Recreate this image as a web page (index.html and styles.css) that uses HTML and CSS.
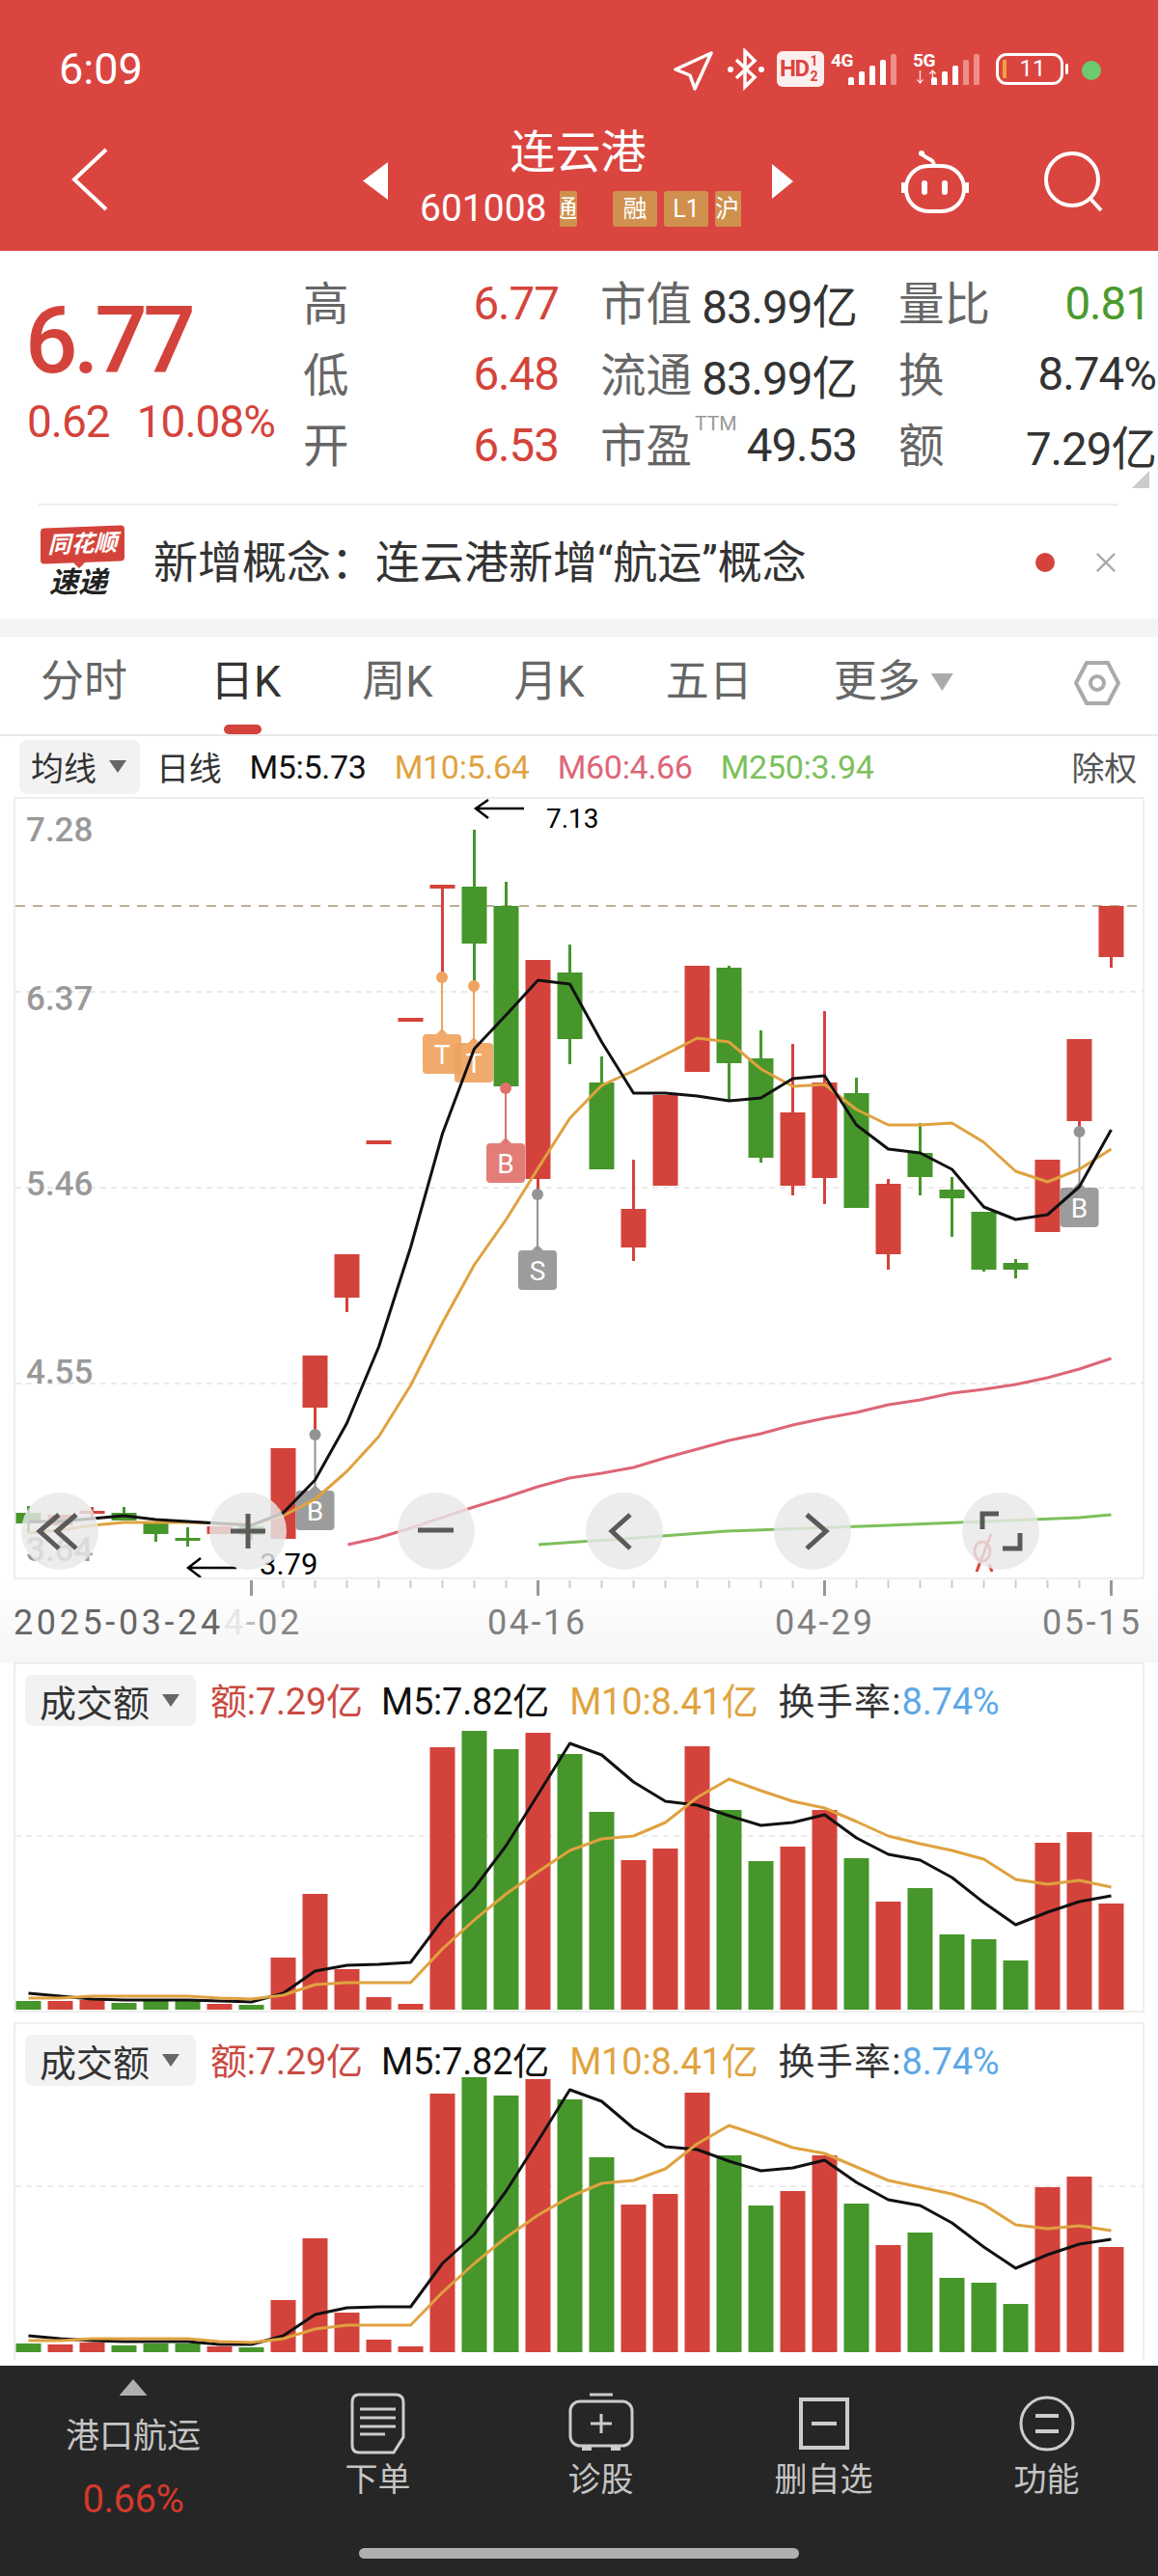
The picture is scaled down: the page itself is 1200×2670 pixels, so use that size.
FILE: index.html
```html
<!DOCTYPE html>
<html lang="zh">

<head>
  <meta charset="UTF-8" />
  <meta name="viewport" content="width=device-width, initial-scale=1.0" />
  <title>连云港 601008</title>
  <link rel="stylesheet" href="styles.css">
</head>

<body>
  <div class="header">
    <div class="status-bar">
      <span class="clock">6:09</span>
      <svg class="icon-locate" viewBox="0 0 42 42">
        <path d="M39 3 L2 20 L17 26 L22 40 Z" />
      </svg>
      <svg class="icon-bt" viewBox="0 0 38 44">
        <path d="M9 12 L28 30 L18 40 V3 L28 13 L9 31" />
        <circle cx="3" cy="22" r="3" />
        <circle cx="35" cy="22" r="3" />
      </svg>
      <span class="hd-badge">HD<span class="hd-sub">1<br>2</span></span>
      <div class="signal signal-4g">
        <span class="net-label">4G</span>
        <div class="bars">
          <i class="b1"></i><i class="b2"></i><i class="b3"></i><i class="b4"></i><i class="b5 dim"></i>
        </div>
      </div>
      <div class="signal signal-5g">
        <span class="net-label">5G</span>
        <span class="net-arrows">↓↑</span>
        <div class="bars">
          <i class="b1"></i><i class="b2"></i><i class="b3"></i><i class="b4 dim"></i><i class="b5 dim"></i>
        </div>
      </div>
      <div class="battery"><i class="battery-low"></i>11</div>
      <i class="battery-nub"></i>
      <i class="green-dot"></i>
    </div>

    <div class="nav-bar">
      <svg class="icon-back" viewBox="0 0 40 66">
        <path d="M36 2 L3 33 L36 64" />
      </svg>
      <div class="tri-left"></div>
      <div class="stock-title">
        <div class="stock-name">连云港</div>
        <div class="stock-sub">
          <span class="stock-code">601008</span>
          <span class="tag tag-cut-left">通</span>
          <span class="tag tag-first">融</span>
          <span class="tag">L1</span>
          <span class="tag tag-cut-right">沪</span>
        </div>
      </div>
      <div class="tri-right"></div>
      <svg class="icon-robot" viewBox="0 0 76 68">
        <path d="M37 18 C37 9 27 12 24 4" />
        <circle cx="24" cy="5" r="3" />
        <rect x="8" y="18" width="60" height="47" rx="23" />
        <path d="M5 35 V46 M71 35 V46" />
        <rect class="solid" x="24" y="33" width="6" height="15" rx="3" />
        <rect class="solid" x="45" y="33" width="6" height="15" rx="3" />
      </svg>
      <svg class="icon-search" viewBox="0 0 64 64">
        <circle cx="30" cy="30" r="27" />
        <path d="M49 50 L60 62" />
      </svg>
    </div>
  </div>

  <div class="quote">
    <div class="price-box">
      <div class="price-big">6.77</div>
      <div class="price-change"><span>0.62</span><span>10.08%</span></div>
    </div>
    <div class="stats">
      <div class="stat"><span class="stat-label">高</span><span class="stat-red">6.77</span></div>
      <div class="stat"><span class="stat-label">市值</span><span class="stat-val">83.99亿</span></div>
      <div class="stat"><span class="stat-label">量比</span><span class="stat-green">0.81</span></div>
      <div class="stat"><span class="stat-label">低</span><span class="stat-red">6.48</span></div>
      <div class="stat"><span class="stat-label">流通</span><span class="stat-val">83.99亿</span></div>
      <div class="stat"><span class="stat-label">换</span><span class="stat-val">8.74%</span></div>
      <div class="stat"><span class="stat-label">开</span><span class="stat-red">6.53</span></div>
      <div class="stat"><span class="stat-label">市盈<sup class="ttm">TTM</sup></span><span class="stat-val">49.53</span></div>
      <div class="stat"><span class="stat-label">额</span><span class="stat-val">7.29亿</span></div>
    </div>
    <div class="corner"></div>
  </div>

  <div class="news">
    <div class="news-logo">
      <div class="logo-top">同花顺</div>
      <div class="logo-bottom">速递</div>
    </div>
    <div class="news-text">新增概念：连云港新增“航运”概念</div>
    <i class="news-dot"></i>
    <svg class="news-close" viewBox="0 0 24 24">
      <path d="M2 2 L22 22 M22 2 L2 22" />
    </svg>
  </div>

  <div class="gap"></div>

  <div class="tabs">
    <div class="tab">分时</div>
    <div class="tab active">日K</div>
    <div class="tab">周K</div>
    <div class="tab">月K</div>
    <div class="tab">五日</div>
    <div class="tab tab-more">更多<i class="caret caret-light"></i></div>
    <svg class="icon-hex" viewBox="0 0 48 48">
      <path d="M13 3 H35 L46 24 L35 45 H13 L2 24 Z" />
      <circle cx="24" cy="24" r="7" />
    </svg>
  </div>

  <div class="legend">
    <div class="chip chip-ma">均线<i class="caret"></i></div>
    <span>日线</span>
    <span class="c-black">M5:5.73</span>
    <span class="c-orange">M10:5.64</span>
    <span class="c-pink">M60:4.66</span>
    <span class="c-green">M250:3.94</span>
    <span class="legend-right">除权</span>
  </div>

  <div class="kline-panel">
    <svg id="klineChart" class="kline-svg" viewBox="16 828 1168 807"></svg>
  </div>
  <div class="axis">
    <svg id="axisChart" class="axis-svg" viewBox="0 1637 1200 86"></svg>
  </div>

  <div class="vol-panel vol-first">
    <div class="vol-head">
      <div class="chip chip-vol">成交额<i class="caret"></i></div>
      <span class="c-red vol-amount">额:7.29亿</span>
      <span class="c-black">M5:7.82亿</span>
      <span class="c-orange">M10:8.41亿</span>
      <span class="c-dark">换手率:<span class="c-blue">8.74%</span></span>
    </div>
    <svg id="volChartA" class="vol-svg" viewBox="16 1789 1168 294"></svg>
  </div>

  <div class="vol-panel vol-second">
    <div class="vol-head">
      <div class="chip chip-vol">成交额<i class="caret"></i></div>
      <span class="c-red vol-amount">额:7.29亿</span>
      <span class="c-black">M5:7.82亿</span>
      <span class="c-orange">M10:8.41亿</span>
      <span class="c-dark">换手率:<span class="c-blue">8.74%</span></span>
    </div>
    <svg id="volChartB" class="vol-svg vol-svg-b" viewBox="16 2163 1168 276"></svg>
  </div>

  <div class="bottom-bar">
    <div class="bar-items">
      <div class="bar-item bar-sector">
        <i class="tri-up"></i>
        <div class="sector-name">港口航运</div>
        <div class="sector-pct">0.66%</div>
      </div>
      <div class="bar-item">
        <svg class="bar-icon" viewBox="0 0 60 66">
          <path d="M10 2 H48 Q56 2 56 10 V46 L46 62 H10 Q3 62 3 54 V10 Q3 2 10 2 Z" />
          <path d="M11 17 H48 M11 26 H48 M11 35 H48 M11 43 H37" />
        </svg>
        <div class="bar-label">下单</div>
      </div>
      <div class="bar-item">
        <svg class="bar-icon" viewBox="0 0 70 66">
          <rect x="3" y="9" width="64" height="46" rx="10" />
          <path d="M23 2 H47 M35 22 V42 M24 32 H46" />
          <path class="thick" d="M15 58 H25 M45 58 H55" />
        </svg>
        <div class="bar-label">诊股</div>
      </div>
      <div class="bar-item">
        <svg class="bar-icon" viewBox="0 0 60 66">
          <rect class="thick" x="6" y="7" width="48" height="50" />
          <path class="thick" d="M17 32 H43" />
        </svg>
        <div class="bar-label">删自选</div>
      </div>
      <div class="bar-item">
        <svg class="bar-icon" viewBox="0 0 60 66">
          <circle cx="30" cy="32" r="27" />
          <path class="thick" d="M18 24 H42 M18 40 H42" />
        </svg>
        <div class="bar-label">功能</div>
      </div>
    </div>
    <div class="home-indicator"></div>
  </div>

  <script src="chart.js"></script>
</body>

</html>
```

FILE: styles.css
```css
* {
  box-sizing: border-box;
}

body {
  font-family: Roboto, "Noto Sans CJK SC", sans-serif;
  margin: 0;
  width: 1200px;
  height: 2670px;
  overflow: hidden;
  background-color: #fff;
  color: #333;
}

svg {
  display: block;
  fill: none;
}

i {
  display: block;
}

/* top red area */
.header {
  height: 260px;
  background-color: #db4540;
  color: #fff;
}

.status-bar {
  height: 130px;
  padding-top: 50px;
  display: flex;
  align-items: flex-start;
  position: relative;
}

.clock {
  font-size: 45px;
  line-height: 44px;
  margin-left: 61px;
  width: 637px;
}

.icon-locate {
  width: 42px;
  height: 42px;
  margin-top: 2px;
  stroke: #fff;
  stroke-width: 3.5;
  stroke-linejoin: round;
}

.icon-bt {
  width: 38px;
  height: 44px;
  margin-left: 14px;
  stroke: #fff;
  stroke-width: 3.5;
}

.icon-bt circle {
  fill: #fff;
  stroke: none;
}

.hd-badge {
  width: 49px;
  height: 37px;
  margin: 3px 0 0 13px;
  background-color: #fdeeee;
  border-radius: 6px;
  color: #db4540;
  font-size: 24px;
  font-weight: 700;
  letter-spacing: -1.5px;
  line-height: 37px;
  padding-left: 3px;
  display: flex;
}

.hd-sub {
  font-size: 14px;
  line-height: 16px;
  letter-spacing: 0;
  margin-left: 2px;
  padding-top: 2px;
}

.signal {
  position: relative;
  height: 40px;
  margin-top: 4px;
}

.signal-4g {
  width: 70px;
  margin-left: 7px;
}

.signal-5g {
  width: 70px;
  margin-left: 15px;
}

.net-label {
  position: absolute;
  left: 0;
  top: 0;
  font-size: 19px;
  font-weight: 700;
  line-height: 18px;
  letter-spacing: -0.5px;
}

.net-arrows {
  position: absolute;
  left: 0;
  top: 18px;
  font-size: 15px;
  line-height: 16px;
  letter-spacing: -2px;
}

.bars {
  position: absolute;
  right: 1px;
  bottom: 6px;
  display: flex;
  align-items: flex-end;
  gap: 5px;
}

.signal-4g .bars {
  right: 2px;
}

.bars i {
  width: 6px;
  background-color: #fff;
  border-radius: 2px 2px 0 0;
}

.bars .b1 {
  height: 8px;
}

.bars .b2 {
  height: 14px;
}

.bars .b3 {
  height: 20px;
}

.bars .b4 {
  height: 26px;
}

.bars .b5 {
  height: 32px;
}

.bars .dim {
  background-color: #ee8f8b;
}

.battery {
  width: 70px;
  height: 33px;
  margin: 5px 0 0 16px;
  border: 3px solid #fff;
  border-radius: 11px;
  font-size: 24px;
  line-height: 27px;
  text-align: center;
  padding-left: 6px;
  position: relative;
}

.battery-low {
  position: absolute;
  left: 4px;
  top: 4px;
  width: 4px;
  height: 19px;
  background-color: #eda23d;
}

.battery-nub {
  width: 3px;
  height: 11px;
  margin: 16px 0 0 2px;
  background-color: #fff;
  border-radius: 2px;
}

.green-dot {
  width: 20px;
  height: 20px;
  margin: 13px 0 0 14px;
  background-color: #6ccb70;
  border-radius: 50%;
}

.nav-bar {
  height: 130px;
  display: flex;
  align-items: flex-start;
}

.icon-back {
  width: 40px;
  height: 66px;
  margin: 23px 0 0 74px;
  stroke: #fff;
  stroke-width: 4;
}

.tri-left {
  width: 26px;
  height: 39px;
  margin: 38px 0 0 262px;
  background-color: #fff;
  clip-path: polygon(100% 0, 0 50%, 100% 100%);
}

.stock-title {
  width: 398px;
  height: 120px;
  flex-shrink: 0;
}

.stock-name {
  text-align: center;
  font-size: 47px;
  line-height: 56px;
  margin: 0 2px 0 -2px;
}

.stock-sub {
  height: 42px;
  margin: 9px 0 0 33px;
  display: flex;
  align-items: center;
}

.stock-code {
  font-size: 39px;
  line-height: 42px;
  width: 145px;
}

.tag {
  width: 46px;
  height: 37px;
  margin-right: 7px;
  background-color: #d0914f;
  border-radius: 3px;
  font-size: 25px;
  line-height: 37px;
  text-align: center;
  overflow: hidden;
  display: flex;
  justify-content: center;
}

.tag-cut-left {
  width: 18px;
  justify-content: flex-end;
  border-radius: 0 3px 3px 0;
  flex-shrink: 0;
}

.tag-first {
  margin-left: 30px;
}

.tag-cut-right {
  width: 27px;
  justify-content: flex-start;
  border-radius: 3px 0 0 3px;
  margin-right: 0;
}

.tri-right {
  width: 22px;
  height: 36px;
  margin-top: 40px;
  background-color: #fff;
  clip-path: polygon(0 0, 100% 50%, 0 100%);
}

.icon-robot {
  width: 76px;
  height: 68px;
  margin: 24px 0 0 109px;
  stroke: #fff;
  stroke-width: 4;
}

.icon-robot circle,
.icon-robot .solid {
  fill: #fff;
  stroke: none;
}

.icon-search {
  width: 64px;
  height: 64px;
  margin: 26px 0 0 74px;
  stroke: #fff;
  stroke-width: 4;
}

/* quote block */
.quote {
  height: 262px;
  position: relative;
  padding: 18px 0 0 28px;
  display: flex;
}

.price-box {
  width: 286px;
  padding-top: 25px;
  color: #d4433b;
}

.price-big {
  font-size: 96px;
  line-height: 100px;
  font-weight: 500;
  letter-spacing: -4.5px;
  margin-left: -2px;
}

.price-change {
  margin-top: 12px;
  font-size: 46px;
  line-height: 44px;
  display: flex;
  gap: 28px;
  letter-spacing: -1px;
  white-space: nowrap;
}

.stats {
  display: grid;
  grid-template-columns: 265px 266px 267px;
  grid-auto-rows: 73.5px;
  column-gap: 43px;
  white-space: nowrap;
}

.stat {
  display: flex;
  justify-content: space-between;
  align-items: center;
  font-size: 47.5px;
  letter-spacing: -1px;
}

.stat-label {
  color: #666;
  letter-spacing: 0;
  display: flex;
  align-items: flex-start;
  margin-bottom: 6px;
}

.stat-red {
  color: #d4433b;
}

.stat-green {
  color: #4a9a2c;
  margin-right: 6px;
}

.stat-val {
  color: #333;
}

.ttm {
  font-size: 21px;
  line-height: 30px;
  color: #999;
  margin-left: 3px;
}

.corner {
  position: absolute;
  left: 1173px;
  top: 228px;
  width: 18px;
  height: 18px;
  background-color: #ccc;
  clip-path: polygon(100% 0, 100% 100%, 0 100%);
}

/* news row */
.news {
  height: 119px;
  margin: 0 41px 0 40px;
  border-top: 2px solid #eee;
  display: flex;
  align-items: center;
}

.news-logo {
  width: 87px;
  margin-left: 2px;
}

.logo-top {
  height: 37px;
  background-color: #d4433b;
  color: #fff;
  font-size: 24px;
  line-height: 36px;
  font-weight: 700;
  font-style: italic;
  text-align: center;
  border-radius: 4px;
  transform: skewY(-2deg);
  position: relative;
}

.logo-top::after {
  content: "";
  position: absolute;
  left: 34px;
  top: 37px;
  border: 6px solid transparent;
  border-top-color: #d4433b;
}

.logo-bottom {
  margin: 6px 0 0 9px;
  font-size: 30px;
  line-height: 30px;
  font-weight: 700;
  font-style: italic;
  color: #222;
}

.news-text {
  margin-left: 30px;
  font-size: 46px;
  line-height: 50px;
  width: 914px;
  flex-shrink: 0;
  white-space: nowrap;
}

.news-dot {
  width: 20px;
  height: 20px;
  background-color: #d4433b;
  border-radius: 50%;
}

.news-close {
  width: 22px;
  height: 22px;
  margin-left: 42px;
  stroke: #aaa;
  stroke-width: 2.5;
}

.gap {
  height: 19px;
  background-color: #f4f4f4;
}

/* period tabs */
.tabs {
  height: 103px;
  border-bottom: 2px solid #e8e8e8;
  padding: 22px 0 0 42px;
  display: flex;
  align-items: flex-start;
  gap: 84px;
  position: relative;
}

.tab {
  font-size: 45px;
  line-height: 50px;
  color: #666;
  display: flex;
  align-items: center;
  white-space: nowrap;
}

.tab.active {
  color: #333;
  margin-left: 2px;
  position: relative;
}

.tab.active::after {
  content: "";
  position: absolute;
  left: 14px;
  top: 69px;
  width: 39px;
  height: 10px;
  background-color: #d4433b;
  border-radius: 5px;
}

.caret {
  width: 18px;
  height: 13px;
  margin-left: 13px;
  background-color: #666;
  clip-path: polygon(0 0, 100% 0, 50% 100%);
}

.caret-light {
  width: 23px;
  height: 18px;
  margin-left: 11px;
  background-color: #aaa;
}

.icon-hex {
  width: 48px;
  height: 48px;
  margin: 2px 0 0 41px;
  stroke: #aaa;
  stroke-width: 4;
}

/* moving average legend */
.legend {
  height: 63px;
  padding-left: 20px;
  display: flex;
  align-items: center;
  gap: 29px;
  font-size: 34px;
  letter-spacing: -0.3px;
}

.chip {
  background-color: #f2f2f2;
  border-radius: 8px;
  display: flex;
  align-items: center;
  color: #333;
}

.chip-ma {
  width: 125px;
  height: 56px;
  padding-left: 12px;
  margin-right: -12px;
  letter-spacing: 0;
}

.legend-right {
  margin-left: auto;
  margin-right: 22px;
  color: #555;
}

.c-black {
  color: #111;
}

.c-orange {
  color: #e0a33f;
}

.c-pink {
  color: #dd6677;
}

.c-green {
  color: #7cc05c;
}

.c-red {
  color: #c94a42;
}

.c-dark {
  color: #333;
  letter-spacing: 1.2px;
}

.c-blue {
  color: #5da8e6;
  letter-spacing: -0.2px;
}

/* k-line chart */
.kline-panel {
  height: 811px;
  margin: 0 14px;
  border: 2px solid #eee;
}

.kline-svg {
  width: 1168px;
  height: 807px;
  overflow: hidden;
}

.axis {
  height: 86px;
  background: linear-gradient(180deg, #fff 0%, #f6f6f6 100%);
}

.axis-svg {
  width: 1200px;
  height: 86px;
}

/* volume charts */
.vol-panel {
  margin: 0 14px;
  border: 2px solid #eee;
}

.vol-first {
  height: 363px;
  margin-bottom: 10px;
}

.vol-second {
  height: 350px;
  border-bottom: 0;
}

.vol-head {
  height: 64px;
  padding: 11px 0 5px 10px;
  display: flex;
  align-items: center;
  gap: 21px;
  font-size: 38px;
  letter-spacing: -0.2px;
  white-space: nowrap;
}

.vol-amount {
  margin-right: -2px;
}

.chip-vol {
  width: 177px;
  height: 53px;
  padding-left: 15px;
  margin-right: -6px;
  letter-spacing: 0;
  font-size: 38px;
  flex-shrink: 0;
  align-self: flex-start;
}

.vol-svg {
  width: 1168px;
  height: 294px;
  overflow: visible;
}

.vol-svg-b {
  height: 276px;
}

/* bottom bar */
.bottom-bar {
  height: 218px;
  margin-top: 6px;
  background-color: #262626;
  color: #c4c4c4;
}

.bar-items {
  height: 189px;
  display: grid;
  grid-template-columns: 276px repeat(4, 231px);
}

.bar-item {
  display: flex;
  flex-direction: column;
  align-items: center;
  padding-top: 28px;
}

.bar-icon {
  width: 70px;
  height: 66px;
  stroke: #ccc;
  stroke-width: 3;
}

.bar-icon .thick {
  stroke-width: 4;
}

.bar-label {
  font-size: 34px;
  line-height: 40px;
  margin-top: 4px;
}

.bar-sector {
  padding-top: 14px;
}

.tri-up {
  width: 29px;
  height: 17px;
  background-color: #b0b0b0;
  clip-path: polygon(50% 0, 100% 100%, 0 100%);
}

.sector-name {
  margin-top: 21px;
  font-size: 35px;
  line-height: 44px;
}

.sector-pct {
  margin-top: 21px;
  font-size: 40px;
  line-height: 44px;
  color: #d43a2c;
  letter-spacing: -0.5px;
}

.home-indicator {
  width: 456px;
  height: 11px;
  margin: 0 auto;
  background-color: #b0b0b0;
  border-radius: 6px;
}
```

FILE: chart.js
```js
const RED = "#d4433b";
const GREEN = "#46962b";
const BLACK = "#111";
const ORANGE = "#dfa23f";
const PINK = "#dd6677";
const LIME = "#7cc05c";
const GRAY = "#949494";
const PEACH = "#efa35f";

const xAt = (i) => 29.5 + 33 * i;

// 每根K线: [上影, 实体上, 实体下, 下影, 涨/跌]
const candles = [
  [1561, 1568, 1579, 1589, "g"], [1570, 1570, 1581, 1581, "r"], [1562, 1566, 1568, 1576, "r"],
  [1562, 1568, 1576, 1576, "g"], [1579, 1579, 1590, 1598, "g"], [1583, 1594, 1597, 1603, "g"],
  [1582, 1582, 1590, 1590, "r"], [1582, 1582, 1591, 1596, "g"], [1501, 1501, 1595, 1595, "r"],
  [1405, 1405, 1459, 1487, "r"], [1300, 1300, 1345, 1360, "r"], [1182, 1182, 1186, 1186, "r"],
  [1055, 1055, 1059, 1059, "r"], [919, 917, 921, 1013, "r"], [860, 919, 978, 1022, "g"],
  [914, 939, 1126, 1126, "g"], [995, 995, 1222, 1238, "r"], [979, 1008, 1077, 1103, "g"],
  [1095, 1122, 1212, 1212, "g"], [1202, 1253, 1293, 1307, "r"], [1135, 1135, 1229, 1229, "r"],
  [1001, 1001, 1111, 1111, "r"], [1001, 1003, 1102, 1142, "g"], [1068, 1097, 1200, 1205, "g"],
  [1082, 1153, 1229, 1239, "r"], [1048, 1122, 1221, 1248, "r"], [1117, 1133, 1252, 1252, "g"],
  [1222, 1227, 1300, 1316, "r"], [1164, 1195, 1220, 1239, "g"], [1220, 1233, 1242, 1282, "g"],
  [1256, 1256, 1316, 1318, "g"], [1305, 1309, 1316, 1325, "g"], [1202, 1202, 1277, 1277, "r"],
  [1077, 1077, 1162, 1173, "r"], [939, 939, 992, 1003, "r"],
];

const ma5 = [1577, 1577, 1574, 1571, 1575, 1577, 1579, 1581, 1568, 1534, 1475, 1396, 1293, 1175, 1087, 1052, 1016, 1020,
  1080, 1133, 1133, 1136, 1141, 1138, 1118, 1115, 1166, 1191, 1195, 1212, 1251, 1264, 1259, 1230, 1171];
const ma10 = [1589, 1586, 1581, 1578, 1578, 1578, 1579, 1580, 1571, 1554, 1525, 1489, 1436, 1371, 1311, 1264, 1211, 1159,
  1125, 1110, 1093, 1076, 1080, 1108, 1126, 1124, 1150, 1166, 1166, 1164, 1184, 1214, 1225, 1212, 1191];
const ma60 = [[360.5, 1601], [392, 1594], [425, 1584], [458, 1573], [491, 1562], [524, 1552], [557, 1541], [590, 1532],
  [623.5, 1527], [656.5, 1521], [689.5, 1511], [722.5, 1502], [755.5, 1493], [788.5, 1486], [821.5, 1477], [854.5, 1470],
  [887.5, 1464], [920.5, 1456], [953.5, 1451], [986.5, 1444], [1019.5, 1440], [1052.5, 1435], [1085.5, 1428], [1118.5, 1419],
  [1151.5, 1408]];
const ma250 = [[558, 1601], [600, 1598], [647, 1595], [753, 1587], [920, 1581], [1021, 1577], [1118, 1573], [1151.5, 1570]];

// 买卖点: [x, 圆点y, 标记y, 颜色, 字母]
const marks = [
  [326.5, 1487, 1545, GRAY, "B"], [458, 1013, 1072, PEACH, "T"], [491, 1022, 1081, PEACH, "T"],
  [524, 1128, 1185, "#e0726c", "B"], [557, 1238, 1296, GRAY, "S"], [1118.5, 1173, 1231, GRAY, "B"],
];

const barColors = "grrgggrgrrrrrrgg" + "rg" + "grrrgg" + "rrg" + "rgggg" + "rrr";
const volA = {
  tops: [2074, 2074, 2073, 2076, 2074, 2074, 2077, 2078, 2029, 1963, 2041, 2070, 2077, 1811, 1794, 1813, 1796, 1818,
    1878, 1928, 1916, 1810, 1876, 1929, 1914, 1876, 1926, 1971, 1957, 2005, 2010, 2032, 1910, 1899, 1973],
  base: 2083,
  grid: 1903,
  black: [2066, 2069, 2072, 2073, 2073, 2073, 2074, 2075, 2066, 2043, 2037, 2036, 2034, 1990, 1957, 1913, 1860, 1807,
    1819, 1847, 1867, 1871, 1882, 1892, 1889, 1881, 1905, 1922, 1928, 1946, 1972, 1995, 1982, 1971, 1965],
  orange: [2071, 2071, 2069, 2069, 2069, 2069, 2071, 2072, 2068, 2057, 2055, 2055, 2055, 2020, 1990, 1963, 1940, 1918,
    1906, 1903, 1889, 1863, 1844, 1856, 1867, 1874, 1888, 1903, 1911, 1918, 1927, 1948, 1953, 1949, 1956],
};
const volB = {
  tops: [2430, 2431, 2429, 2432, 2430, 2430, 2433, 2434, 2385, 2321, 2398, 2426, 2433, 2171, 2154, 2173, 2156, 2177,
    2237, 2286, 2275, 2170, 2235, 2287, 2272, 2235, 2285, 2328, 2315, 2362, 2367, 2389, 2268, 2257, 2330],
  base: 2439,
  grid: 2267,
  black: [2422, 2425, 2427, 2428, 2428, 2428, 2431, 2431, 2422, 2400, 2393, 2392, 2392, 2347, 2317, 2272, 2220, 2167,
    2179, 2207, 2226, 2229, 2241, 2251, 2248, 2240, 2263, 2281, 2287, 2305, 2330, 2352, 2338, 2327, 2322],
  orange: [2427, 2427, 2425, 2425, 2425, 2425, 2428, 2429, 2425, 2415, 2411, 2411, 2411, 2377, 2347, 2320, 2297, 2278,
    2264, 2261, 2249, 2223, 2204, 2215, 2227, 2233, 2247, 2261, 2268, 2275, 2286, 2307, 2311, 2308, 2313],
};

function rect(x, y, w, h, fill) {
  return `<rect x="${x}" y="${y}" width="${w}" height="${h}" fill="${fill}"/>`;
}

function line(x1, y1, x2, y2, color, width, dash) {
  const d = dash ? ` stroke-dasharray="${dash}"` : "";
  return `<line x1="${x1}" y1="${y1}" x2="${x2}" y2="${y2}" stroke="${color}" stroke-width="${width}"${d}/>`;
}

function poly(points, color, width) {
  const pts = points.map((p) => p.join(",")).join(" ");
  return `<polyline points="${pts}" fill="none" stroke="${color}" stroke-width="${width}" stroke-linejoin="round"/>`;
}

function series(values) {
  return values.map((y, i) => [xAt(i), y]);
}

function label(x, y, text, size, color, anchor) {
  const a = anchor ? ` text-anchor="${anchor}"` : "";
  return `<text x="${x}" y="${y}" font-size="${size}" fill="${color}"${a}>${text}</text>`;
}

function drawKline() {
  let s = "";

  [1028, 1231, 1434].forEach((y) => {
    s += line(16, y, 1184, y, "#e4e4e4", 1.5, "6 5");
  });
  s += line(16, 939, 1184, 939, "#bdb096", 2, "10 8");

  [["7.28", 872], ["6.37", 1047], ["5.46", 1239], ["4.55", 1434], ["3.64", 1618]].forEach(([t, y]) => {
    s += `<text x="27" y="${y}" font-size="35" font-weight="500" fill="#999">${t}</text>`;
  });

  candles.forEach((c, i) => {
    const color = c[4] === "r" ? RED : GREEN;
    const x = xAt(i);
    s += line(x, c[0], x, c[3], color, 3);
    s += rect(x - 13, c[1], 26, Math.max(c[2] - c[1], 3), color);
  });

  marks.forEach(([x, dot, top, color, letter]) => {
    s += line(x, dot, x, top, color, 2);
    s += `<circle cx="${x}" cy="${dot}" r="6" fill="${color}"/>`;
    s += `<path d="M${x - 20} ${top + 4} q0 -4 4 -4 h10 l6 -6 l6 6 h10 q4 0 4 4 v33 q0 4 -4 4 h-32 q-4 0 -4 -4 z" fill="${color}" fill-opacity=".92"/>`;
    s += label(x, top + 31, letter, 28, "#fff", "middle");
  });

  s += poly(ma250, LIME, 3);
  s += poly(ma60, PINK, 3);
  s += poly(series(ma10), ORANGE, 3);
  s += poly(series(ma5), BLACK, 3);

  // 最高最低标注
  s += `<path d="M543 838 H493 M506 829 L493 838 L506 848" fill="none" stroke="#000" stroke-width="2.5"/>`;
  s += label(566, 858, "7.13", 28, "#000");
  s += `<path d="M245 1625 H195 M208 1615 L195 1625 L208 1635" fill="none" stroke="#000" stroke-width="2.5"/>`;
  s += label(269, 1632, "3.79", 31, "#000");

  // 圆形按钮下面的残影
  s += `<path d="M1027 1590 L1012 1629 M1025 1621 L1028 1629" stroke="${RED}" stroke-width="3" fill="none"/>`;
  s += `<ellipse cx="1018" cy="1608" rx="8" ry="10" stroke="${RED}" stroke-width="3" fill="none"/>`;

  [62, 257, 452, 647, 842, 1037].forEach((cx) => {
    s += `<circle cx="${cx}" cy="1587" r="40" fill="#e8e8e8" fill-opacity=".82"/>`;
  });
  const icons = [
    "M61 1570 L41 1587 L61 1605 M79 1570 L59 1587 L79 1605",
    "M239 1587 H275 M257 1569 V1605",
    "M433 1586 H470",
    "M653 1570 L634 1587 L653 1605",
    "M836 1570 L856 1587 L836 1605",
    "M1018 1585 V1569 H1035 M1057 1589 V1605 H1039",
  ];
  icons.forEach((d) => {
    s += `<path d="${d}" fill="none" stroke="#5a5a5a" stroke-width="5"/>`;
  });

  document.getElementById("klineChart").innerHTML = s;
}

function drawAxis() {
  let s = "";
  for (let i = 7; i < 35; i++) {
    const x = xAt(i);
    const major = i === 7 || i === 16 || i === 25 || i === 34;
    s += line(x, 1638, x, major ? 1654 : 1646, major ? "#999" : "#ccc", major ? 3 : 2);
  }
  s += `<text x="14" y="1694" font-size="36" letter-spacing="3.6" fill="#666">2025-03-24</text>`;
  s += `<text x="232" y="1694" font-size="36" letter-spacing="2.5" fill="#888"><tspan fill="#e6e6e6">4</tspan><tspan fill="#bbb">-</tspan>02</text>`;
  s += `<text x="505" y="1694" font-size="36" letter-spacing="2.5" fill="#808080">04-16</text>`;
  s += `<text x="803" y="1694" font-size="36" letter-spacing="2.5" fill="#808080">04-29</text>`;
  s += `<text x="1080" y="1694" font-size="36" letter-spacing="2.5" fill="#808080">05-15</text>`;
  document.getElementById("axisChart").innerHTML = s;
}

function drawVolume(id, v) {
  let s = line(16, v.grid, 1184, v.grid, "#e6e6e6", 1.5, "6 5");
  v.tops.forEach((top, i) => {
    const color = barColors[i] === "r" ? RED : GREEN;
    s += rect(xAt(i) - 13, top, 26, v.base - top, color);
  });
  s += poly(series(v.black), BLACK, 3);
  s += poly(series(v.orange), ORANGE, 3);
  document.getElementById(id).innerHTML = s;
}

drawKline();
drawAxis();
drawVolume("volChartA", volA);
drawVolume("volChartB", volB);
```
